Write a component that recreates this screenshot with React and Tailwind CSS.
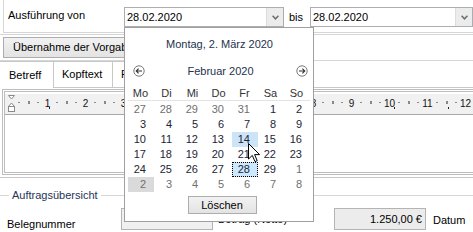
import React from 'react'

const weeks = [
  [['27', 0], ['28', 0], ['29', 0], ['30', 0], ['31', 0], ['1', 1], ['2', 1]],
  [['3', 1], ['4', 1], ['5', 1], ['6', 1], ['7', 1], ['8', 1], ['9', 1]],
  [['10', 1], ['11', 1], ['12', 1], ['13', 1], ['14', 1], ['15', 1], ['16', 1]],
  [['17', 1], ['18', 1], ['19', 1], ['20', 1], ['21', 1], ['22', 1], ['23', 1]],
  [['24', 1], ['25', 1], ['26', 1], ['27', 1], ['28', 1], ['29', 1], ['1', 0]],
  [['2', 0], ['3', 0], ['4', 0], ['5', 0], ['6', 0], ['7', 0], ['8', 0]],
]

const dayNames = ['Mo', 'Di', 'Mi', 'Do', 'Fr', 'Sa', 'So']

function DateBox({ width }) {
  return (
    <div className={`flex h-[20px] shrink-0 border border-[#abadb3] bg-white ${width}`}>
      <span className="flex flex-1 items-center pl-[2px]">28.02.2020</span>
      <span className="flex w-[17px] items-center justify-center border-l border-[#dcdcdc] bg-[#ececec]">
        <svg width="7" height="5" viewBox="0 0 7 5">
          <path d="M0.6 0.8 L3.5 3.8 L6.4 0.8" fill="none" stroke="#6d6d6d" strokeWidth="1.5" />
        </svg>
      </span>
    </div>
  )
}

function NavArrow({ dir }) {
  return (
    <svg width="12" height="12" viewBox="0 0 12 12">
      <circle cx="6" cy="6" r="5.2" fill="white" stroke="#6a6a6a" strokeWidth="0.9" />
      {dir === 'left' ? (
        <path d="M9 6 H3.3 M5.6 3.6 L3.2 6 L5.6 8.4" fill="none" stroke="#333" strokeWidth="1.1" />
      ) : (
        <path d="M3 6 H8.7 M6.4 3.6 L8.8 6 L6.4 8.4" fill="none" stroke="#333" strokeWidth="1.1" />
      )}
    </svg>
  )
}

function Ruler() {
  const units = Array.from({ length: 13 }, (_, i) => i)
  return (
    <svg width="480" height="20" viewBox="0 0 480 20" className="block">
      {/* indent markers */}
      <path d="M3.5 1.5 H9.5 L6.5 5 Z" fill="white" stroke="#8a8a8a" strokeWidth="1" />
      <path d="M3.5 12.5 L6.5 9 L9.5 12.5 Z" fill="white" stroke="#8a8a8a" strokeWidth="1" />
      <rect x="3.5" y="12.5" width="6" height="5" fill="white" stroke="#8a8a8a" strokeWidth="1" />
      {units.map((n) => {
        const x0 = 4.5 + 38 * n
        return (
          <g key={n}>
            {n > 0 && (
              <text x={x0} y="12.5" fontSize="10" textAnchor="middle" fill="#111" fontFamily="Liberation Sans, Arial, sans-serif">
                {n}
              </text>
            )}
            <rect x={x0 + 9} y="8" width="1" height="1" fill="#222" />
            <rect x={x0 + 19} y="7" width="1" height="3" fill="#222" />
            <rect x={x0 + 28} y="8" width="1" height="1" fill="#222" />
          </g>
        )
      })}
      <rect x="44" y="13" width="1" height="2" fill="#222" />
      <rect x="389" y="13" width="1" height="2" fill="#222" />
      <rect x="443" y="13" width="1" height="2" fill="#222" />
    </svg>
  )
}

function Calendar() {
  return (
    <div className="absolute left-[124px] top-[27px] flex h-[195px] w-[190px] flex-col border border-[#a0a0a0] bg-white pl-[3px] text-[#1c2536]">
      <div className="mt-[9px] h-[14px] pr-[2px] text-center leading-[14px] text-[#25324d]">Montag, 2. März 2020</div>
      <div className="mt-[13px] flex h-[14px] items-center justify-between pl-[5px] pr-[5px] text-[#25324d]">
        <NavArrow dir="left" />
        <span className="leading-[14px]">Februar 2020</span>
        <NavArrow dir="right" />
      </div>
      <div className="mt-[9px] flex h-[14px] w-[182px] border-b border-[#e3e3e3] text-[#333]">
        {dayNames.map((d) => (
          <span key={d} className="w-[26px] pr-[1px] text-center leading-[12px]">{d}</span>
        ))}
      </div>
      <div className="mt-[1px] flex w-[182px] flex-col">
        {weeks.map((week, wi) => (
          <div key={wi} className="flex h-[15px]">
            {week.map(([d, cur], di) => {
              let cell = 'border border-transparent'
              if (wi === 2 && di === 4) cell = 'border border-transparent bg-[#cce4f7]'
              if (wi === 4 && di === 4) cell = 'border border-dotted border-black bg-[#cce8ff]'
              if (wi === 5 && di === 0) cell = 'border border-transparent bg-[#dadada]'
              return (
                <span
                  key={di}
                  className={`flex w-[26px] items-center justify-end pr-[7px] leading-[13px] ${cell} ${cur ? 'text-[#1c2536]' : 'text-[#6f6f6f]'}`}
                >
                  {d}
                </span>
              )
            })}
          </div>
        ))}
      </div>
      <div className="mt-[4px] flex justify-center pl-[3px]">
        <button className="h-[18px] w-[69px] border border-[#adadad] bg-gradient-to-b from-[#f2f2f2] to-[#e3e3e3] text-black leading-[16px]">
          Löschen
        </button>
      </div>
    </div>
  )
}

function Cursor() {
  return (
    <svg className="pointer-events-none absolute left-[248px] top-[143px]" width="13" height="21" viewBox="0 0 13 21">
      <path d="M0.5 0.5 L0.5 16 L4.3 12.4 L7 18.6 L9.2 17.7 L6.6 11.6 L11.6 11.6 Z" fill="white" stroke="black" strokeWidth="1" strokeLinejoin="miter" />
    </svg>
  )
}

export default function App() {
  return (
    <div className="relative h-[232px] w-[473px] overflow-hidden bg-white font-['Liberation_Sans',Arial,sans-serif] text-[11px] leading-[13px] text-black">
      {/* Ausführung row */}
      <div className="ml-[3px] flex h-[33px] border-b border-l border-[#d6d6d6]">
        <span className="mt-[9px] w-[120px] shrink-0 pl-[4px]">Ausführung von</span>
        <div className="mt-[7px] flex">
          <DateBox width="w-[160px]" />
          <span className="ml-[5px] w-[21px] shrink-0 pt-[4px]">bis</span>
          <DateBox width="w-[163px]" />
        </div>
      </div>
      <div className="h-[2px] border-b border-[#d6d6d6]" />

      {/* Vorgaben button */}
      <div className="flex border-b border-[#d6d6d6] pb-[2px] pl-[3px] pt-[2px]">
        <button className="h-[21px] w-[150px] border border-[#adadad] bg-gradient-to-b from-[#f2f2f2] to-[#e3e3e3] pl-[9px] text-left">
          Übernahme der Vorgaben
        </button>
      </div>

      {/* Tabs */}
      <div className="flex h-[27px] items-end border-b border-[#c8c8c8] pt-[1px]">
        <span className="relative -mb-px h-[27px] w-[54px] border-r border-t border-[#c8c8c8] bg-white pl-[9px] pt-[7px]">Betreff</span>
        <span className="h-[26px] w-[59px] border-r border-t border-[#c8c8c8] bg-white pl-[8px] pt-[6px]">Kopftext</span>
        <span className="h-[26px] w-[60px] border-r border-t border-[#c8c8c8] bg-white pl-[8px] pt-[6px]">Fußtext</span>
      </div>

      {/* Editor */}
      <div className="border-b border-[#c8c8c8] pb-[2px]">
        <div className="ml-[2px] mt-[1px] h-[86px] w-[480px] border-[3px] border-double border-[#bdbdbd]">
          <div className="mt-[2px] h-[21px] border-b border-[#a8a8a8] bg-[#f1f1f1]">
            <Ruler />
          </div>
        </div>
      </div>

      {/* Auftragsübersicht */}
      <div className="mt-[11px] flex items-center">
        <span className="h-px w-[9px] bg-[#d6d6d6]" />
        <span className="px-[3px] text-[#1e3557]">Auftragsübersicht</span>
        <span className="h-px flex-1 bg-[#d6d6d6]" />
      </div>
      <div className="mt-[6px] flex items-start">
        <span className="w-[121px] shrink-0 pl-[7px] pt-[10px]">Belegnummer</span>
        <span className="h-[22px] w-[92px] shrink-0 border border-[#b4b4b4] bg-[#f0f0f0]" />
        <span className="w-[121px] shrink-0 pl-[5px] pt-[5px]">Betrag (Netto)</span>
        <span className="flex h-[22px] w-[92px] shrink-0 items-center justify-end border border-[#b4b4b4] bg-[#ececec] pr-[3px]">1.250,00 €</span>
        <span className="pl-[7px] pt-[6px]">Datum</span>
      </div>

      <Calendar />
      <Cursor />
    </div>
  )
}
